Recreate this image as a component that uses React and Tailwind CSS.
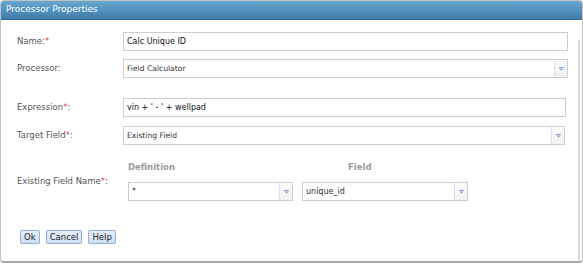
import React from "react";

const Arrow = () => (
  <div className="w-[13px] h-full border-l border-[#dde0e6] bg-gradient-to-b from-[#fcfcfc] to-[#f0f0f0] flex items-center justify-center">
    <svg width="5" height="4" viewBox="0 0 5 4">
      <rect x="0" y="0" width="5" height="1" fill="#8aa7cf" />
      <path d="M0.5 1.5 L4.5 1.5 L2.5 3.8 Z" fill="#8aa7cf" />
    </svg>
  </div>
);

const Req = () => <span className="text-[#e8403a]">*</span>;

function Select({ value, w, text = "text-[7.6px]" }) {
  return (
    <div className={`${w} h-[19px] border border-[#c9ced8] bg-white flex items-stretch`}>
      <div className={`flex-1 flex items-center pl-[3px] ${text} text-[#333]`}>{value}</div>
      <Arrow />
    </div>
  );
}

export default function App() {
  return (
    <div
      className="w-[583px] h-[268px] bg-white overflow-hidden"
      style={{ fontFamily: '"DejaVu Sans", Verdana, sans-serif' }}
    >
      <div className="h-[263px] border border-[#c4c4c4] border-b-[#a8a8a8] border-b-2 rounded-[4px] flex flex-col overflow-hidden">
        <div className="h-[19px] bg-gradient-to-b from-[#67a7cf] to-[#3e7dab] border-b border-[#2f6690] text-white text-[9px] px-[5px] flex items-center">
          Processor Properties
        </div>
        <div className="flex-1 flex">
          <div className="flex-1 flex flex-col pl-[16px] pt-[12px] text-[8.5px] text-[#555]">
            <div className="flex items-center h-[19px]">
              <div className="w-[106px]">Name:<Req /></div>
              <div className="w-[445px] h-[19px] border border-[#c9ced8] flex items-center pl-[3px] text-[8px] text-[#111]">
                Calc Unique ID
              </div>
            </div>
            <div className="flex items-center h-[19px] mt-[8px]">
              <div className="w-[106px]">Processor:</div>
              <Select value="Field Calculator" w="w-[445px]" />
            </div>
            <div className="flex items-center h-[19px] mt-[20px]">
              <div className="w-[106px]">Expression<Req />:</div>
              <div className="w-[443px] h-[19px] border border-[#c9ced8] flex items-center pl-[3px] text-[8px] text-[#111]">
                vin + ' - ' + wellpad
              </div>
            </div>
            <div className="flex items-center h-[19px] mt-[9px]">
              <div className="w-[106px]">Target Field<Req />:</div>
              <Select value="Existing Field" w="w-[442px]" />
            </div>
            <div className="flex items-center mt-[15px]">
              <div className="w-[111px] pt-[1px]">Existing Field Name<Req />:</div>
              <div className="flex flex-col">
                <div className="flex h-[14px] items-center text-[8.5px] font-bold text-[#9a9a9a]">
                  <div className="w-[174px]">Definition</div>
                  <div className="pl-[46px]">Field</div>
                </div>
                <div className="flex mt-[8px] gap-[9px]">
                  <Select value="*" w="w-[165px]" text="text-[8px]" />
                  <Select value="unique_id" w="w-[166px]" text="text-[8px]" />
                </div>
              </div>
            </div>
            <div className="flex gap-[6px] mt-[29px] ml-[3px]">
              {["Ok", "Cancel", "Help"].map((b) => (
                <div
                  key={b}
                  className="h-[14px] px-[3px] flex items-center border border-[#8fb1d9] rounded-[2px] bg-gradient-to-b from-[#e4eefa] to-[#cfe0f4] text-[8.5px] text-[#222]"
                >
                  {b}
                </div>
              ))}
            </div>
          </div>
          <div className="w-[2px] mt-[20px] mr-[2px] bg-[#dcdcdc]" />
        </div>
      </div>
    </div>
  );
}
